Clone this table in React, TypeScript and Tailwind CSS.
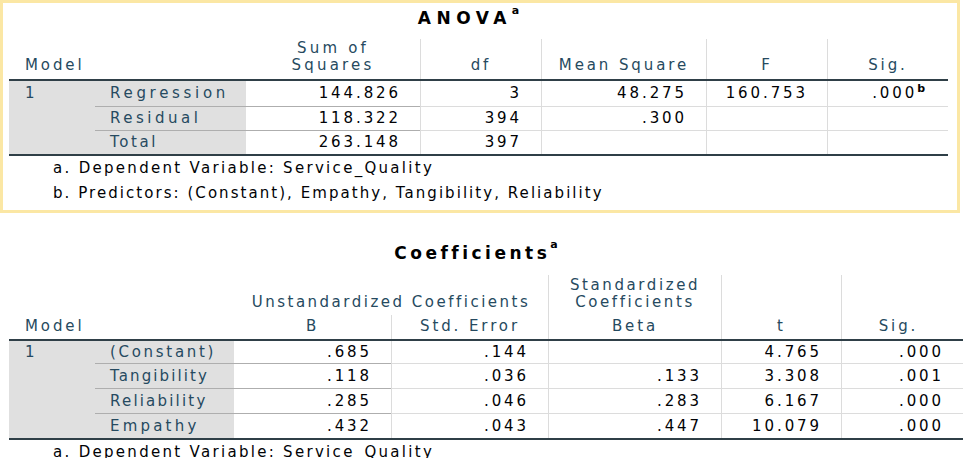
import React from "react";

const LINE = "border-[#aeaeae]";
const VLINE = "border-[#dcdcdc]";

function Title({ text, track, shift, supMt }: { text: string; track: string; shift: string; supMt: string }) {
  return (
    <div className={`flex items-start justify-center h-[20px] ${shift}`}>
      <span className={`text-[17px] leading-[20px] font-bold text-black ${track}`}>{text}</span>
      <span className={`text-[11px] leading-[11px] font-bold text-black tracking-normal ${supMt}`}>a</span>
    </div>
  );
}

type ARow = { label: string; tr: string; ss: string; df: string; ms: string; f: string; sig: string; sup?: string };

const anovaRows: ARow[] = [
  { label: "Regression", tr: "tracking-[3.7px]", ss: "144.826", df: "3", ms: "48.275", f: "160.753", sig: ".000", sup: "b" },
  { label: "Residual", tr: "tracking-[3.5px]", ss: "118.322", df: "394", ms: ".300", f: "", sig: "" },
  { label: "Total", tr: "tracking-[2.6px]", ss: "263.148", df: "397", ms: "", f: "", sig: "" },
];

function AnovaTable() {
  return (
    <div className="w-[960px] border-[3px] border-[#fbe7a4] pl-[6px] pt-[5px] pb-[4px]">
      <div className="w-[939px]">
        <Title text="ANOVA" track="tracking-[5.5px]" shift="pr-[20px]" supMt="-mt-[3px]" />
        <div className="mt-[11px] flex h-[42px] border-b-2 border-[#2f3f47] text-[#264a60]">
          <div className="w-[86px] flex items-end pl-[16px] pb-[5px]">Model</div>
          <div className="w-[151px]" />
          <div className="w-[174px] flex items-end justify-center text-center pb-[5px] tracking-[3.2px]">
            Sum of
            <br />
            Squares
          </div>
          <div className={`w-[121px] border-l ${VLINE} flex items-end justify-center pb-[5px]`}>df</div>
          <div className={`w-[165px] border-l ${VLINE} flex items-end justify-center pb-[5px]`}>Mean Square</div>
          <div className={`w-[121px] border-l ${VLINE} flex items-end justify-center pb-[5px]`}>F</div>
          <div className={`w-[121px] border-l ${VLINE} flex items-end justify-center pb-[5px]`}>Sig.</div>
        </div>
        <div className="border-b-2 border-[#2f3f47]">
          {anovaRows.map((r, i) => {
            const top = i > 0 ? `border-t ${LINE}` : "";
            return (
              <div key={r.label} className={`flex ${i === 0 ? "h-[25px]" : "h-[24px]"}`}>
                <div className="w-[86px] bg-[#e0e0e0] pl-[16px] flex items-center text-[#264a60]">{i === 0 ? "1" : ""}</div>
                <div className={`w-[151px] bg-[#e0e0e0] pl-[15px] flex items-center text-[#264a60] ${r.tr} ${top}`}>{r.label}</div>
                <div className={`w-[174px] flex items-center justify-end pr-[19px] text-[#010205] ${top}`}>{r.ss}</div>
                <div className={`w-[121px] border-l ${VLINE} flex items-center justify-end pr-[19px] text-[#010205] ${top}`}>{r.df}</div>
                <div className={`w-[165px] border-l ${VLINE} flex items-center justify-end pr-[19px] text-[#010205] ${top}`}>{r.ms}</div>
                <div className={`w-[121px] border-l ${VLINE} flex items-center justify-end pr-[19px] text-[#010205] ${top}`}>{r.f}</div>
                <div className={`w-[121px] border-l ${VLINE} flex items-center justify-end text-[#010205] ${r.sup ? "pr-[23px]" : "pr-[19px]"} ${top}`}>
                  {r.sig}
                  {r.sup && <span className="text-[11px] leading-[11px] tracking-normal self-start mt-[2px] font-bold">{r.sup}</span>}
                </div>
              </div>
            );
          })}
        </div>
        <div className="pl-[44px] leading-[25px] text-[#010205]">
          <div className="tracking-[2.3px]">a. Dependent Variable: Service_Quality</div>
          <div className="tracking-[2.05px]">b. Predictors: (Constant), Empathy, Tangibility, Reliability</div>
        </div>
      </div>
    </div>
  );
}

type CRow = { label: string; tr: string; b: string; se: string; beta: string; t: string; sig: string };

const coefRows: CRow[] = [
  { label: "(Constant)", tr: "tracking-[2.7px]", b: ".685", se: ".144", beta: "", t: "4.765", sig: ".000" },
  { label: "Tangibility", tr: "tracking-[2.1px]", b: ".118", se: ".036", beta: ".133", t: "3.308", sig: ".001" },
  { label: "Reliability", tr: "tracking-[2.2px]", b: ".285", se: ".046", beta: ".283", t: "6.167", sig: ".000" },
  { label: "Empathy", tr: "tracking-[3.2px]", b: ".432", se: ".043", beta: ".447", t: "10.079", sig: ".000" },
];

function CoefTable() {
  return (
    <div className="pl-[9px] pt-[30px]">
      <div className="w-[954px]">
        <Title text="Coefficients" track="tracking-[3.5px]" shift="pr-[20px]" supMt="-mt-[4px]" />
        <div className="mt-[12px] flex h-[66px] border-b-2 border-[#2f3f47] text-[#264a60]">
          <div className="w-[86px] flex items-end pl-[16px] pb-[4px]">Model</div>
          <div className="w-[139px]" />
          <div className="w-[314px] flex flex-col">
            <div className="h-[40px] flex items-end justify-center pb-[4px] tracking-[2.5px]">Unstandardized Coefficients</div>
            <div className="h-[24px] flex">
              <div className="w-[157px] flex items-end justify-center pb-[4px]">B</div>
              <div className={`w-[157px] border-l ${VLINE} flex items-end justify-center pb-[4px]`}>Std. Error</div>
            </div>
          </div>
          <div className={`w-[173px] border-l ${VLINE} flex flex-col`}>
            <div className="h-[40px] flex items-end justify-center text-center pb-[4px] tracking-[2.6px]">
              Standardized
              <br />
              Coefficients
            </div>
            <div className="h-[24px] flex items-end justify-center pb-[4px]">Beta</div>
          </div>
          <div className={`w-[120px] border-l ${VLINE} flex items-end justify-center pb-[4px]`}>t</div>
          <div className={`w-[122px] border-l ${VLINE} flex items-end justify-center pb-[4px] pr-[8px]`}>Sig.</div>
        </div>
        <div className="border-b-2 border-[#2f3f47]">
          {coefRows.map((r, i) => {
            const top = i > 0 ? `border-t ${LINE}` : "";
            return (
              <div key={r.label} className={`flex ${i === 0 ? "h-[22px]" : "h-[25px]"}`}>
                <div className="w-[86px] bg-[#e0e0e0] pl-[16px] flex items-center text-[#264a60]">{i === 0 ? "1" : ""}</div>
                <div className={`w-[139px] bg-[#e0e0e0] pl-[15px] flex items-center text-[#264a60] ${r.tr} ${top}`}>{r.label}</div>
                <div className={`w-[157px] flex items-center justify-end pr-[19px] text-[#010205] ${top}`}>{r.b}</div>
                <div className={`w-[157px] border-l ${VLINE} flex items-center justify-end pr-[19px] text-[#010205] ${top}`}>{r.se}</div>
                <div className={`w-[173px] border-l ${VLINE} flex items-center justify-end pr-[19px] text-[#010205] ${top}`}>{r.beta}</div>
                <div className={`w-[120px] border-l ${VLINE} flex items-center justify-end pr-[19px] text-[#010205] ${top}`}>{r.t}</div>
                <div className={`w-[122px] border-l ${VLINE} flex items-center justify-end pr-[19px] text-[#010205] ${top}`}>{r.sig}</div>
              </div>
            );
          })}
        </div>
        <div className="pl-[44px] leading-[25px] tracking-[2.3px] text-[#010205]">a. Dependent Variable: Service_Quality</div>
      </div>
    </div>
  );
}

export default function App() {
  return (
    <div className="w-[963px] h-[458px] overflow-hidden bg-white font-['DejaVu_Sans',sans-serif] text-[15px] leading-[17px] tracking-[2.9px]">
      <AnovaTable />
      <CoefTable />
    </div>
  );
}
